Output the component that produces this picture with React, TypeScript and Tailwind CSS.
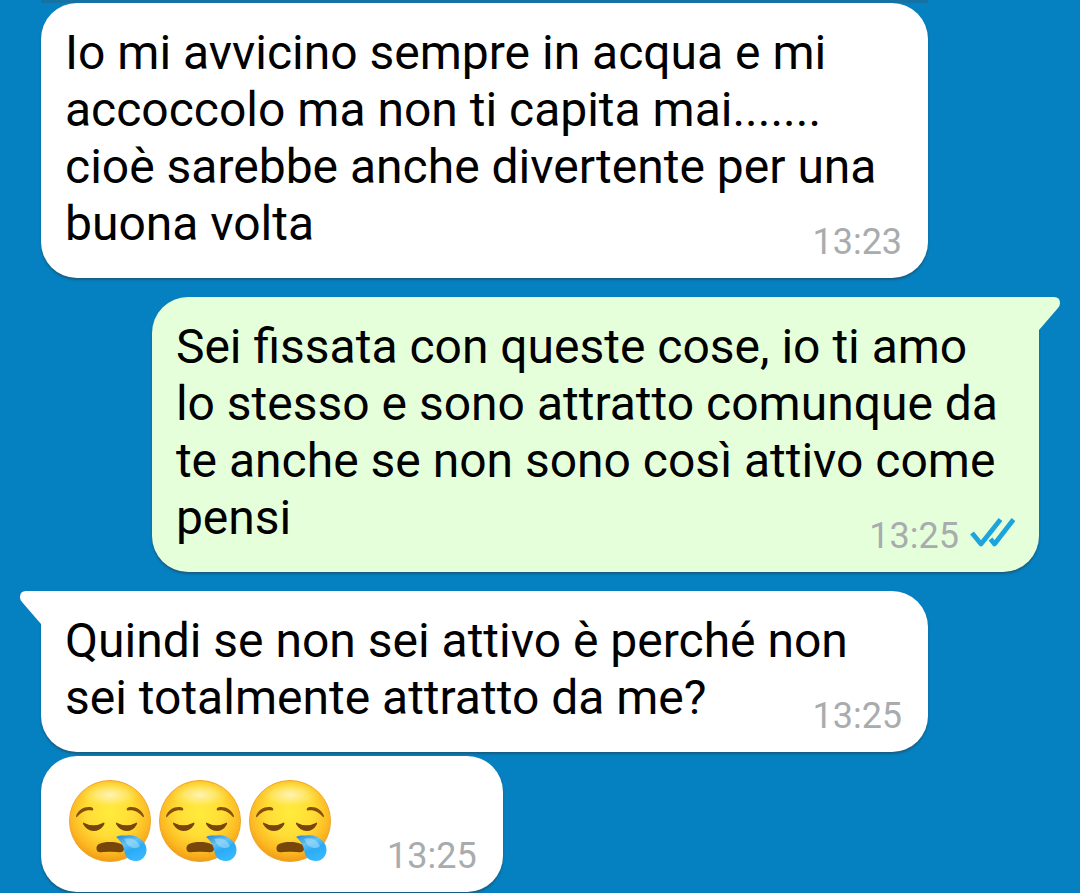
import React from 'react';

interface BubbleProps {
  side: 'in' | 'out';
  time: string;
  tail?: boolean;
  read?: boolean;
  children: React.ReactNode;
}

const Tail: React.FC<{ side: 'in' | 'out' }> = ({ side }) =>
  side === 'out' ? (
    <svg className="absolute left-full top-0 text-[#e5ffdb]" width="21" height="34" viewBox="0 0 21 34" aria-hidden="true">
      <path d="M0 0H15Q21 0 21 6Q21 9 19 11L0 33Z" fill="currentColor" />
    </svg>
  ) : (
    <svg className="absolute right-full top-0 text-white" width="21" height="34" viewBox="0 0 21 34" aria-hidden="true">
      <path d="M21 0H6Q0 0 0 6Q0 9 2 11L21 33Z" fill="currentColor" />
    </svg>
  );

const ReadTicks = () => (
  <svg width="46" height="36" viewBox="0 0 46 36" fill="none" stroke="#1da4dd" strokeWidth="4.8" strokeLinejoin="round" role="img" aria-label="Letto">
    <path d="M3 15L12 26L31.500 1.500" />
    <path d="M21.500 21L25.500 26L44.500 1.500" />
  </svg>
);

const Bubble: React.FC<BubbleProps> = ({ side, time, tail, read, children }) => {
  const shape =
    side === 'out'
      ? `self-end bg-[#e5ffdb] pr-6 ${tail ? 'rounded-tr-none' : ''}`
      : `self-start bg-white pr-[26px] ${tail ? 'rounded-tl-none' : ''}`;

  return (
    <div className={`relative w-8/9 rounded-[36px] pb-[15px] pl-6 pt-[21px] shadow-[0_2px_2px_rgba(40,60,70,0.5)] ${shape}`}>
      {tail && <Tail side={side} />}
      <p className="flow-root text-[48px] leading-[57px] text-black">
        {children}
        <span className="float-right mt-[26px] flex h-[42px] items-center gap-2.5 text-[36px] leading-[42px] text-[#a8acae]">
          <time>{time}</time>
          {read && <ReadTicks />}
        </span>
      </p>
    </div>
  );
};

const SleepyFace = () => (
  <svg width="90" height="90" viewBox="5 5 90 90" role="img" aria-label="😪">
    <defs>
      <radialGradient id="face" cx="50" cy="43" r="53" gradientUnits="userSpaceOnUse">
        <stop offset="0" stopColor="#ffec3c" />
        <stop offset="0.45" stopColor="#ffdc35" />
        <stop offset="0.75" stopColor="#fcb822" />
        <stop offset="1" stopColor="#ea8d0e" />
      </radialGradient>
      <radialGradient id="shine">
        <stop offset="0" stopColor="#fff6c8" stopOpacity="0.9" />
        <stop offset="0.5" stopColor="#fff09a" stopOpacity="0.55" />
        <stop offset="1" stopColor="#ffed55" stopOpacity="0" />
      </radialGradient>
      <linearGradient id="drop" x1="0" y1="0" x2="0.5" y2="1">
        <stop offset="0" stopColor="#2585cc" />
        <stop offset="0.4" stopColor="#64c2f5" />
        <stop offset="0.65" stopColor="#2cabf3" />
        <stop offset="1" stopColor="#35b6ff" />
      </linearGradient>
    </defs>
    <circle cx="50" cy="51" r="40.500" fill="url(#face)" stroke="#f0a42c" strokeWidth="1" />
    <ellipse cx="50" cy="25" rx="30" ry="13" fill="url(#shine)" />
    <g fill="#84500a">
      <path d="M16 46C19 39 25 36 32 37.500C34 38.500 33.500 40.500 32 40.500C26 39.500 21 42.500 17.500 46.500Q16 48 16 46Z" />
      <path d="M84 46C81 39 75 36 68 37.500C66 38.500 66.500 40.500 68 40.500C74 39.500 79 42.500 82.500 46.500Q84 48 84 46Z" />
    </g>
    <g fill="#76460a">
      <path d="M23 52.500Q33.500 58 44 52.500Q45 53 44 55Q40 61 33.500 61Q27 61 23 54Z" />
      <path d="M56 52.500Q66.500 58 77 52.500Q77.500 53 76.500 55Q73 61 66.500 61Q60 61 56 54Z" />
      <path d="M36.500 79C36 74 41 72 50 72C59 72 64 74 64 79C63.500 82.500 61 82.500 57 82Q50 81.500 43 82C39 82.500 37 82.500 36.500 79Z" />
    </g>
    <path d="M56 67C59 65 63 65.500 67 65.500C77 64 87 72 86.500 80C86.500 86 82 91 76 91C69 91 65.500 87 64.500 82C64 75 60 70.500 56 67Z" fill="url(#drop)" />
    <path d="M64 69C70 67 77 69 80 76C76 80 70 78 67 74C66 72 65 70 64 69Z" fill="#b4e6fd" opacity="0.5" />
  </svg>
);

const App: React.FC = () => {
  return (
    <main className="flex min-h-screen flex-col bg-[#0580c0] px-[41px] pb-px font-['Roboto',sans-serif]">
      <div className="h-[3px] w-8/9 bg-[#1572a5]" />
      <Bubble side="in" time="13:23">
        Io mi avvicino sempre in acqua e mi accoccolo ma non ti capita mai....... cioè sarebbe anche divertente per una
        buona volta
      </Bubble>
      <div className="mt-[19px] flex flex-col">
        <Bubble side="out" time="13:25" tail read>
          Sei fissata con queste cose, io ti amo lo stesso e sono attratto comunque da te anche se non sono così attivo
          come pensi
        </Bubble>
      </div>
      <div className="mt-[19px] flex flex-col gap-1">
        <Bubble side="in" time="13:25" tail>
          Quindi se non sei attivo è perché non sei totalmente attratto da me?
        </Bubble>
        <div className="flex gap-[52px] self-start rounded-[36px] bg-white pb-[15px] pl-6 pr-[26px] pt-[19px] shadow-[0_2px_2px_rgba(40,60,70,0.5)]">
          <div className="flex pb-3">
            <SleepyFace />
            <SleepyFace />
            <SleepyFace />
          </div>
          <time className="self-end text-[36px] leading-[42px] text-[#a8acae]">13:25</time>
        </div>
      </div>
    </main>
  );
};

export default App;
